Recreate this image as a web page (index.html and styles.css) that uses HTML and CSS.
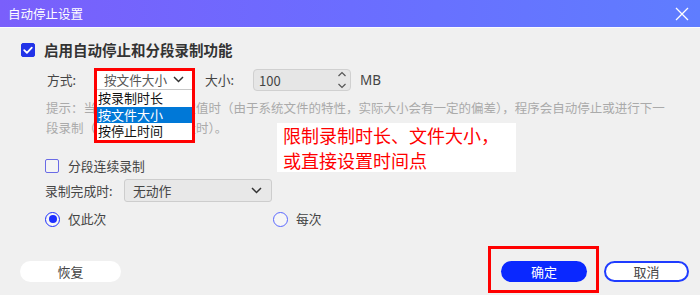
FILE: index.html
```html
<!DOCTYPE html>
<html lang="zh-CN">
<head>
<meta charset="utf-8">
<title>自动停止设置</title>
<link rel="stylesheet" href="styles.css">
</head>
<body>
<div class="dialog">
  <div class="titlebar">
    <span class="title">自动停止设置</span>
    <svg class="close" width="14" height="14" viewBox="0 0 14 14"><path d="M1 1 L13 13 M13 1 L1 13" stroke="#fff" stroke-width="1.3" fill="none"/></svg>
  </div>
  <div class="content">
    <div class="row row-enable">
      <span class="checkbox checked">
        <svg width="14" height="14" viewBox="0 0 14 14"><path d="M3.2 7.2 L5.9 9.8 L10.8 4.6" stroke="#fff" stroke-width="1.8" fill="none" stroke-linecap="round" stroke-linejoin="round"/></svg>
      </span>
      <span class="enable-label">启用自动停止和分段录制功能</span>
    </div>

    <div class="row row-mode">
      <span class="lbl lbl-mode">方式:</span>
      <div class="select-wrap">
        <div class="select-open">
          <span>按文件大小</span>
          <svg class="chev" width="11" height="7" viewBox="0 0 11 7"><path d="M1 1 L5.5 5.5 L10 1" stroke="#333" stroke-width="1.5" fill="none"/></svg>
        </div>
        <ul class="dropdown">
          <li>按录制时长</li>
          <li class="active">按文件大小</li>
          <li>按停止时间</li>
        </ul>
        <span class="annot-box annot-select"></span>
      </div>
      <span class="lbl lbl-size">大小:</span>
      <div class="spinner">
        <span>100</span>
        <svg class="spin-arrows" width="10" height="18" viewBox="0 0 10 18"><path d="M1.5 5 L5 1.5 L8.5 5 M1.5 13 L5 16.5 L8.5 13" stroke="#555" stroke-width="1.2" fill="none"/></svg>
      </div>
      <span class="lbl unit">MB</span>
    </div>

    <p class="hint">提示：当录制文件达到设定值时（由于系统文件的特性，实际大小会有一定的偏差），程序会自动停止或进行下一<br>段录制（即按设定大小分段时）。</p>

    <div class="row row-seg">
      <span class="checkbox"></span>
      <span class="lbl">分段连续录制</span>
    </div>

    <div class="row row-finish">
      <span class="lbl lbl-finish">录制完成时:</span>
      <div class="select-gray">
        <span>无动作</span>
        <svg class="chev" width="11" height="7" viewBox="0 0 11 7"><path d="M1 1 L5.5 5.5 L10 1" stroke="#333" stroke-width="1.5" fill="none"/></svg>
      </div>
    </div>

    <div class="row row-radio">
      <div class="radio-item radio-first">
        <span class="radio checked"></span>
        <span class="lbl">仅此次</span>
      </div>
      <div class="radio-item">
        <span class="radio"></span>
        <span class="lbl">每次</span>
      </div>
    </div>
  </div>

  <div class="footer">
    <button class="btn btn-reset">恢复</button>
    <div class="footer-right">
      <div class="ok-wrap">
        <button class="btn btn-ok">确定</button>
        <span class="annot-box annot-ok"></span>
      </div>
      <button class="btn btn-cancel">取消</button>
    </div>
  </div>

  <div class="annot-note">限制录制时长、文件大小，<br>或直接设置时间点</div>
</div>
</body>
</html>
```

FILE: styles.css
```css
* { box-sizing: border-box; }
html, body { margin: 0; padding: 0; }
body {
  width: 700px;
  height: 295px;
  overflow: hidden;
  background: #f0f0f0;
  font-family: "Noto Sans CJK SC", "Noto Sans", "Liberation Sans", sans-serif;
  color: #444;
}
.dialog {
  position: relative;
  width: 700px;
  height: 295px;
}
.titlebar {
  height: 28px;
  border-bottom: 1px solid #fbfbff;
  background: linear-gradient(90deg, #7a5ffb 0%, #6b6dff 50%, #5f7dff 100%);
  display: flex;
  align-items: center;
  justify-content: space-between;
  padding: 0 11px 0 8px;
}
.title {
  color: #fff;
  font-size: 12.5px;
  line-height: 16px;
}
.close { display: block; }

.content {
  padding-left: 21px;
  display: flex;
  flex-direction: column;
}
.row {
  display: flex;
  align-items: center;
}
.lbl {
  font-size: 12.8px;
  line-height: 16px;
  color: #444;
  white-space: nowrap;
}

/* row 1 */
.row-enable {
  margin-top: 12px;
  height: 20px;
}
.checkbox {
  width: 14px;
  height: 14px;
  border: 1.5px solid #6a6be6;
  border-radius: 2px;
  display: inline-flex;
  align-items: center;
  justify-content: center;
  flex: none;
  background: #f4f4f4;
}
.checkbox.checked {
  background: #2233e8;
  border-color: #2233e8;
}
.checkbox.checked svg { display: block; margin: -1.5px; }
.enable-label {
  margin-left: 9px;
  font-size: 14.5px;
  font-weight: 700;
  color: #333;
  line-height: 20px;
}

/* row 2 */
.row-mode {
  margin-top: 9px;
  margin-left: 26px;
  height: 22px;
}
.lbl-mode { width: 50px; }
.select-wrap {
  position: relative;
  width: 95px;
  height: 20px;
}
.select-open {
  height: 20px;
  background: #fff;
  border-bottom: 1px solid #c8c8c8;
  display: flex;
  align-items: center;
  justify-content: space-between;
  padding: 0 8px 0 7px;
  font-size: 12.6px;
  color: #555;
  line-height: 16px;
}
.chev { display: block; }
.dropdown {
  position: absolute;
  left: 0;
  top: 20px;
  width: 95px;
  margin: 0;
  padding: 0;
  list-style: none;
  background: #fff;
  z-index: 2;
}
.dropdown li {
  height: 16.7px;
  line-height: 16.7px;
  font-size: 13px;
  color: #111;
  padding-left: 1px;
}
.dropdown li.active {
  background: #0078d7;
  color: #fff;
}
.annot-box {
  position: absolute;
  border: 3px solid #f00;
  z-index: 3;
  pointer-events: none;
}
.annot-select {
  left: -3px;
  top: -2px;
  width: 101px;
  height: 75px;
}
.lbl-size { margin-left: 13px; width: 48px; }
.spinner {
  width: 98px;
  height: 22px;
  background: #e6e6e6;
  border: 1px solid #d0d0d0;
  border-radius: 4px;
  display: flex;
  align-items: center;
  justify-content: space-between;
  padding: 0 3px 0 5px;
  font-size: 13px;
  color: #444;
}
.spin-arrows { display: block; }
.unit { margin-left: 9px; font-family: "Noto Sans", "Liberation Sans", sans-serif; font-size: 13.5px; }

/* hint */
.hint {
  margin: 7px 0 0 25px;
  font-size: 12.5px;
  line-height: 20px;
  color: #aaa;
  white-space: nowrap;
}

/* segment checkbox */
.row-seg {
  margin-top: 20px;
  margin-left: 24px;
  height: 16px;
}
.row-seg .lbl { margin-left: 9px; }

/* finish row */
.row-finish {
  margin-top: 5px;
  margin-left: 24px;
  height: 23px;
}
.lbl-finish { width: 79px; }
.select-gray {
  width: 148px;
  height: 23px;
  background: #e8e8e8;
  border: 1px solid #cdcdcd;
  border-radius: 3px;
  display: flex;
  align-items: center;
  justify-content: space-between;
  padding: 0 9px 0 8px;
  font-size: 12.8px;
  color: #444;
}

/* radios */
.row-radio {
  margin-top: 9px;
  margin-left: 24px;
  height: 16px;
}
.radio-item {
  display: flex;
  align-items: center;
}
.radio-first { width: 228px; }
.radio {
  width: 15px;
  height: 15px;
  border-radius: 50%;
  border: 1.5px solid #5a68ff;
  background: #f6f6f6;
  flex: none;
  margin-right: 8px;
  display: inline-flex;
  align-items: center;
  justify-content: center;
}
.radio.checked { border-color: #1c2eff; }
.radio.checked::after {
  content: "";
  width: 8px;
  height: 8px;
  border-radius: 50%;
  background: #1c2eff;
}

/* footer */
.footer {
  margin-top: 34px;
  display: flex;
  align-items: center;
  justify-content: space-between;
  padding: 0 11px 0 20px;
}
.footer-right {
  display: flex;
  align-items: center;
  gap: 17px;
}
.btn {
  height: 21px;
  border-radius: 11px;
  font-family: inherit;
  font-size: 13px;
  line-height: 17px;
  padding: 0;
  border: none;
  color: #444;
}
.btn-reset {
  width: 101px;
  background: #fff;
}
.ok-wrap { position: relative; }
.btn-ok {
  display: block;
  width: 86px;
  background: #0a28ff;
  color: #fff;
}
.annot-ok {
  left: -13px;
  top: -15px;
  width: 111px;
  height: 47px;
}
.btn-cancel {
  width: 85px;
  background: #fff;
  border: 2px solid #1f3cff;
}

/* annotation note */
.annot-note {
  position: absolute;
  left: 277px;
  top: 123px;
  width: 239px;
  height: 49px;
  background: #fff;
  color: #f00;
  font-size: 18px;
  line-height: 25px;
  padding-left: 6px;
  white-space: nowrap;
  z-index: 4;
}
```
